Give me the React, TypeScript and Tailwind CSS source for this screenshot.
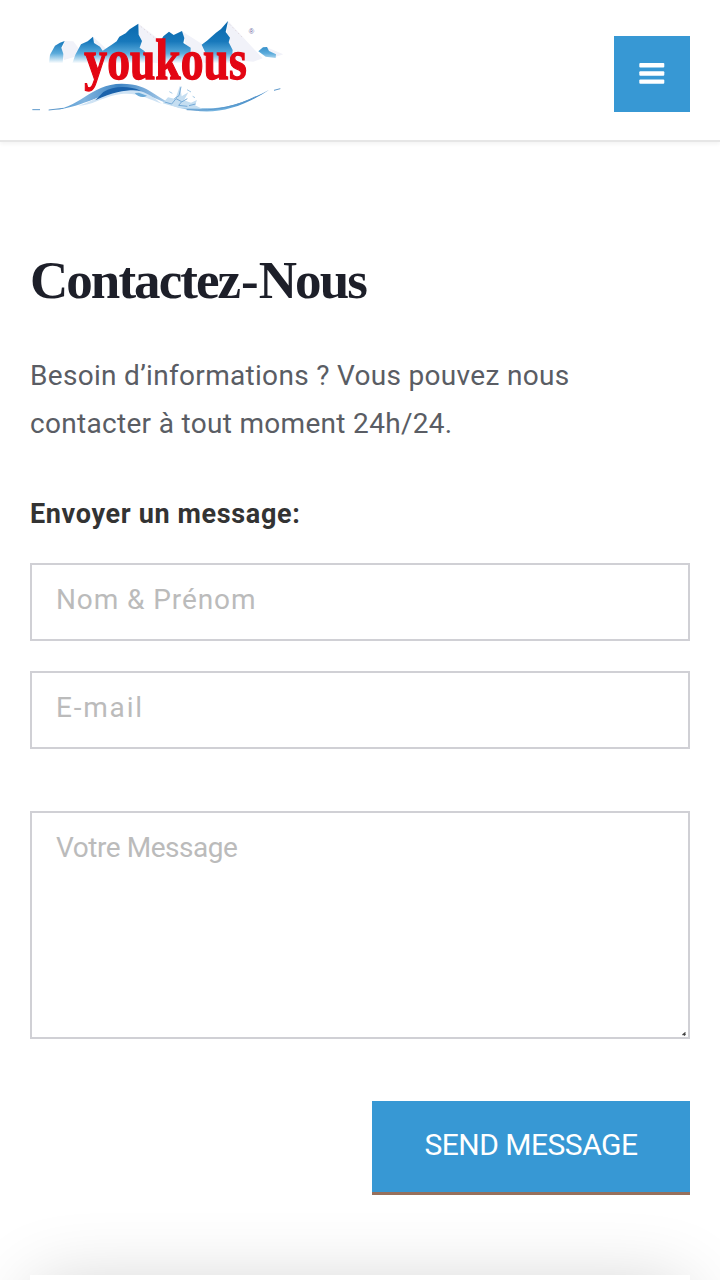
import { useState } from 'react'

const fieldClass =
  "block w-full rounded-none border-2 border-[#d0d0d5] bg-white px-6 text-[28px] text-[#333333] outline-none placeholder:text-[#bbbbbb]"

function Logo() {
  return (
    <svg viewBox="30 30 765 276" className="block h-[92px] w-[255px]" role="img" aria-label="youkous">
      <defs>
        <linearGradient id="peak" x1="0" y1="40" x2="0" y2="160" gradientUnits="userSpaceOnUse">
          <stop offset="0" stopColor="#0868ad" />
          <stop offset="0.45" stopColor="#1778bb" />
          <stop offset="0.75" stopColor="#5aabdb" />
          <stop offset="1" stopColor="#ffffff" />
        </linearGradient>
        <linearGradient id="wave" x1="90" y1="0" x2="780" y2="0" gradientUnits="userSpaceOnUse">
          <stop offset="0" stopColor="#4b94cf" />
          <stop offset="0.15" stopColor="#7fb3de" />
          <stop offset="0.3" stopColor="#3f85c4" />
          <stop offset="0.5" stopColor="#a5c9e8" />
          <stop offset="0.75" stopColor="#6aaedd" />
          <stop offset="1" stopColor="#2270b8" />
        </linearGradient>
      </defs>

      {/* Snow faces */}
      <g fill="#f1f2f9">
        <path d="M134 93 L160 94 L178 118 L165 140 L132 150 L124 124Z" />
        <path d="M219 80 L262 119 L246 140 L220 120Z" />
        <path d="M355 41 L430 98 L420 160 L370 155 L357 97Z" />
        <path d="M486 64 L545 101 L560 160 L510 148Z" />
        <path d="M624 33 L728 145 L700 155 L640 150 L618 92Z" />
        <path d="M740 112 L790 133 L768 140 L730 132Z" />
      </g>

      {/* Shaded faces */}
      <g fill="url(#peak)">
        <path d="M87 160 L90 134 L105 107 L120 98 L134 93 L124 113 L130 132 L128 160Z" />
        <path d="M157 160 L166 134 L183 103 L203 94 L219 80 L222 99 L240 110 L248 122 L275 104 L290 94 L298 80 L317 70 L329 58 L355 41 L356 74 L366 93 L359 113 L374 124 L383 160Z" />
        <path d="M420 96 L430 79 L447 65 L461 75 L486 63 L493 84 L490 99 L512 113 L511 160 L420 160Z" />
        <path d="M545 104 L561 92 L588 68 L603 57 L624 33 L617 66 L630 83 L626 97 L638 120 L634 160 L570 160Z" />
        <path d="M715 124 L729 112 L741 111 L747 123 L768 133 L767 144 L737 140Z" />
      </g>
      <path d="M362 49 L412 91 M629 43 L670 85" fill="none" stroke="#d5c3c8" strokeWidth="1.5" strokeDasharray="5 7" />

      {/* Water */}
      <path d="M85 300 C180 300 207 222 305 221 C397 221 404 271 475 285 C595 313 675 278 748 239 C676 288 594 315 520 301 C437 293 407 251 329 246 C238 242 188 299 85 300Z" fill="url(#wave)" />
      <path d="M176 287 C234 267 265 239 319 239 C379 239 396 260 426 281 C382 268 350 242 286 255 C244 264 216 286 176 287Z" fill="#cfe3f4" />
      <path d="M250 246 C282 226 330 228 362 242 C330 239 290 241 226 271Z" fill="#1a62ab" />
      <path d="M344 249 C355 263 371 264 381 257 L357 248Z" fill="#6baad8" />
      <path d="M428 280 L444 262 L466 267 L480 227 L485 259 L505 247 L492 271 L513 278 L531 270 L525 286 L547 296 L480 295Z" fill="#c5def1" />
      <path d="M434 276 L455 282 L468 266 L485 275 L476 286 L502 289 M463 266 L477 257 L483 230 M485 276 L502 266 M507 287 L527 282" fill="none" stroke="#76abd8" strokeWidth="3" />
      <path d="M448 245 L457 250 M501 239 L513 246 M518 259 L525 263" stroke="#a5cae6" strokeWidth="3" />
      <path d="M37 299 H60 M86 300 L130 295 M500 299 C590 306 655 286 707 260 M762 241 L781 236" fill="none" stroke="#5d98cb" strokeWidth="3" />

      <text
        transform="translate(193 207) scale(0.815 1)"
        fill="#e30613"
        stroke="#e30613"
        strokeWidth="4"
        fontFamily="'Liberation Serif', serif"
        fontWeight="700"
        fontSize="168"
      >
        youkous
      </text>
      <text x="686" y="71" fill="#6b69a3" fontFamily="'Liberation Sans', sans-serif" fontSize="22">®</text>
    </svg>
  )
}

function Header() {
  return (
    <header className="flex h-[142px] shrink-0 items-start justify-between border-b-2 border-[#e6e6e6] bg-white px-[30px] shadow-[0_2px_4px_rgba(0,0,0,0.05)]">
      <a href="#" className="mt-5">
        <Logo />
      </a>
      <button type="button" aria-label="Menu" className="mt-9 flex size-[76px] items-center justify-center bg-[#3798d4]">
        <svg viewBox="0 0 26 22" className="mb-0.5 h-[22px] w-[26px]" fill="#ffffff">
          <rect x="0.3" y="1" width="25" height="4.4" rx="1" />
          <rect x="0.3" y="9.3" width="25" height="4.4" rx="1" />
          <rect x="0.3" y="17.4" width="25" height="4.4" rx="1" />
        </svg>
      </button>
    </header>
  )
}

function ContactForm() {
  const [name, setName] = useState('')
  const [email, setEmail] = useState('')
  const [message, setMessage] = useState('')

  return (
    <form className="mt-[33px] flex flex-col" onSubmit={(e) => e.preventDefault()}>
      <input
        type="text"
        value={name}
        onChange={(e) => setName(e.target.value)}
        placeholder="Nom & Prénom"
        className={`${fieldClass} h-[78px] pb-1.5 tracking-[0.9px]`}
      />
      <input
        type="email"
        value={email}
        onChange={(e) => setEmail(e.target.value)}
        placeholder="E-mail"
        className={`${fieldClass} mt-[30px] h-[78px] pb-1.5 tracking-[1.8px]`}
      />
      <div className="relative mt-[62px]">
        <textarea
          value={message}
          onChange={(e) => setMessage(e.target.value)}
          placeholder="Votre Message"
          className={`${fieldClass} h-[228px] resize-none pt-[19px] leading-[32px] tracking-[-0.45px]`}
        />
        <svg viewBox="0 0 4 4" className="absolute right-1 bottom-[3px] size-1">
          <path d="M0.5 3 L3.5 0.5 M2 3.5 L3.5 2" stroke="#444444" strokeWidth="1.3" />
        </svg>
      </div>
      <button
        type="submit"
        className="mt-[62px] flex h-[94px] w-[318px] items-center justify-center self-end border-b-3 border-[#97705c] bg-[#3798d4] pb-1 text-[30px] tracking-[-0.5px] whitespace-nowrap text-white"
      >
        SEND MESSAGE
      </button>
    </form>
  )
}

export default function App() {
  return (
    <div className="flex h-[1280px] w-[720px] flex-col overflow-hidden bg-white font-['Roboto',sans-serif]">
      <Header />
      <main className="flex flex-col px-[30px] pt-[108px]">
        <h1 className="font-['Liberation_Serif',serif] text-[53px] leading-[60px] font-bold tracking-[-1.95px] whitespace-nowrap text-[#1d1f29]">
          Contactez<span className="mx-[2px]">-</span>Nous
        </h1>
        <p className="mt-[42px] text-[28px] leading-[48px] tracking-[0.31px] whitespace-nowrap text-[#5a5d64]">
          Besoin d’informations ? Vous pouvez nous
          <br />
          contacter à tout moment 24h/24.
        </p>
        <h2 className="mt-[50px] text-[27px] leading-[32px] font-bold tracking-[0.65px] whitespace-nowrap text-[#333333]">
          Envoyer un message:
        </h2>
        <ContactForm />
        <section className="mt-20 h-[200px] shrink-0 bg-white shadow-[0_5px_75px_-5px_rgba(0,0,0,0.19)]" />
      </main>
    </div>
  )
}
